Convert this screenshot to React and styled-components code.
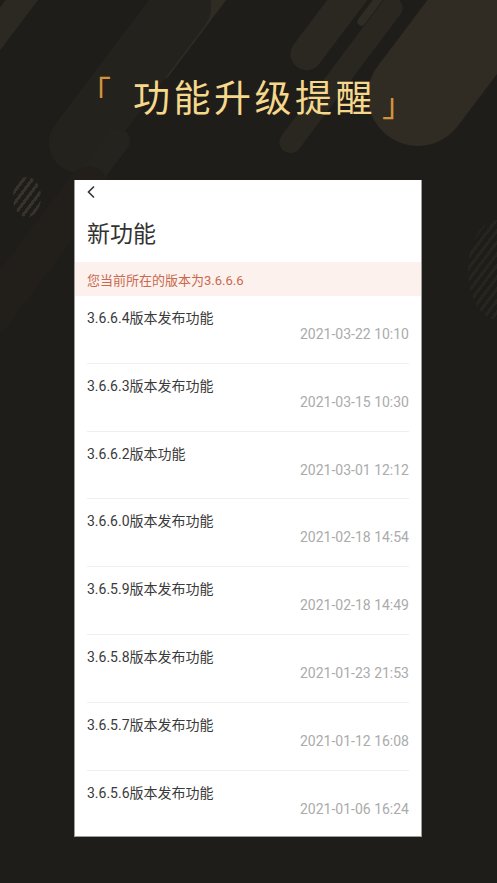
import React from "react";
import styled, { createGlobalStyle } from "styled-components";

const Global = createGlobalStyle`
  html, body { margin: 0; padding: 0; background: #1f1d19; }
  body { font-family: Roboto, "Noto Sans CJK SC", sans-serif; }
`;

const Page = styled.div`
  position: relative;
  width: 497px;
  height: 883px;
  overflow: hidden;
  background: #1f1d19;
`;

const Decor = styled.div`
  position: absolute;
  inset: 0;
  pointer-events: none;
`;

const Bar = styled.div`
  position: absolute;
  border-radius: 999px;
  transform: rotate(37deg);
  background: ${(p) => p.$color || "#2a2720"};
`;

const Striped = styled.div`
  position: absolute;
  border-radius: 50%;
  background: repeating-linear-gradient(
    -53deg,
    ${(p) => p.$color} 0 3px,
    transparent 3px 7px
  );
`;

const Header = styled.header`
  position: relative;
  height: 180px;
  padding-top: 12px;
  box-sizing: border-box;
  display: flex;
  align-items: center;
  justify-content: center;
`;

const Title = styled.h1`
  margin: 0;
  height: 44px;
  display: flex;
  align-items: center;
  font-family: "Noto Sans CJK SC", sans-serif;
  font-weight: 400;
  font-size: 37px;
  line-height: 44px;
  letter-spacing: 3.5px;
  color: #f6d88c;
`;

const Bracket = styled.span`
  color: #d5923c;
  font-size: 32px;
  line-height: 32px;
  letter-spacing: 0;
  align-self: ${(p) => (p.$end ? "flex-end" : "flex-start")};
  margin: ${(p) => (p.$end ? "0 0 0 6px" : "0 22px 0 -4px")};
`;

const Card = styled.section`
  position: relative;
  margin-left: 74px;
  width: 348px;
  height: 657px;
  box-sizing: border-box;
  background: #fff;
  border: 1px solid #9d9d9d;
  border-top: none;
  overflow: hidden;
`;

const NavBar = styled.div`
  height: 24px;
  display: flex;
  align-items: center;
  padding-left: 11px;
`;

const PageTitle = styled.h2`
  margin: 0;
  height: 56px;
  display: flex;
  align-items: center;
  padding: 0 0 2px 12px;
  box-sizing: content-box;
  font-family: "Noto Sans CJK SC", sans-serif;
  font-weight: 400;
  font-size: 23px;
  color: #333;
`;

const Banner = styled.div`
  height: 34px;
  display: flex;
  align-items: center;
  padding-left: 12px;
  background: #fdf1ee;
  color: #c8694e;
  font-size: 13px;
`;

const List = styled.div`
  display: flex;
  flex-direction: column;
`;

const Row = styled.div`
  height: 67.8px;
  box-sizing: border-box;
  margin: 0 12px;
  padding-top: 12px;
  border-bottom: 1px solid #efefef;
  display: flex;
  flex-direction: column;
`;

const RowTitle = styled.div`
  font-size: 14px;
  line-height: 20px;
  color: #3a3a3a;
`;

const RowDate = styled.div`
  font-size: 14px;
  line-height: 18px;
  color: #ababab;
  text-align: right;
  margin-top: -3px;
`;

const items = [
  ["3.6.6.4版本发布功能", "2021-03-22 10:10"],
  ["3.6.6.3版本发布功能", "2021-03-15 10:30"],
  ["3.6.6.2版本功能", "2021-03-01 12:12"],
  ["3.6.6.0版本发布功能", "2021-02-18 14:54"],
  ["3.6.5.9版本发布功能", "2021-02-18 14:49"],
  ["3.6.5.8版本发布功能", "2021-01-23 21:53"],
  ["3.6.5.7版本发布功能", "2021-01-12 16:08"],
  ["3.6.5.6版本发布功能", "2021-01-06 16:24"],
];

export default function App() {
  return (
    <Page>
      <Global />
      <Decor>
        <Bar $color="#2c2922" style={{ left: -10, top: -60, width: 26, height: 170 }} />
        <Bar $color="#2f2c24" style={{ left: 190, top: -30, width: 12, height: 120 }} />
        <Bar $color="#24221d" style={{ left: 100, top: -40, width: 60, height: 230 }} />
        <Bar $color="#25231e" style={{ left: 80, top: 120, width: 24, height: 110 }} />
        <Bar $color="#2b2821" style={{ left: 320, top: -50, width: 32, height: 130 }} />
        <Bar $color="#2f2c24" style={{ left: 370, top: -20, width: 8, height: 50 }} />
        <Bar $color="#2a2720" style={{ left: 330, top: -20, width: 22, height: 190 }} />
        <Bar $color="#302c24" style={{ left: 410, top: -80, width: 100, height: 240 }} />
        <Bar $color="#221f1b" style={{ left: 20, top: 150, width: 40, height: 200 }} />
        <Striped $color="#37332a" style={{ left: 13, top: 177, width: 28, height: 40 }} />
        <Striped $color="#28251f" style={{ left: 468, top: 220, width: 60, height: 100 }} />
      </Decor>
      <Header>
        <Title>
          <Bracket>「</Bracket>
          功能升级提醒
          <Bracket $end>」</Bracket>
        </Title>
      </Header>
      <Card>
        <NavBar>
          <svg width="10" height="14" viewBox="0 0 10 14">
            <path d="M8 1.5 L2.5 7 L8 12.5" fill="none" stroke="#333" strokeWidth="1.6" />
          </svg>
        </NavBar>
        <PageTitle>新功能</PageTitle>
        <Banner>您当前所在的版本为3.6.6.6</Banner>
        <List>
          {items.map(([t, d]) => (
            <Row key={t}>
              <RowTitle>{t}</RowTitle>
              <RowDate>{d}</RowDate>
            </Row>
          ))}
        </List>
      </Card>
    </Page>
  );
}
